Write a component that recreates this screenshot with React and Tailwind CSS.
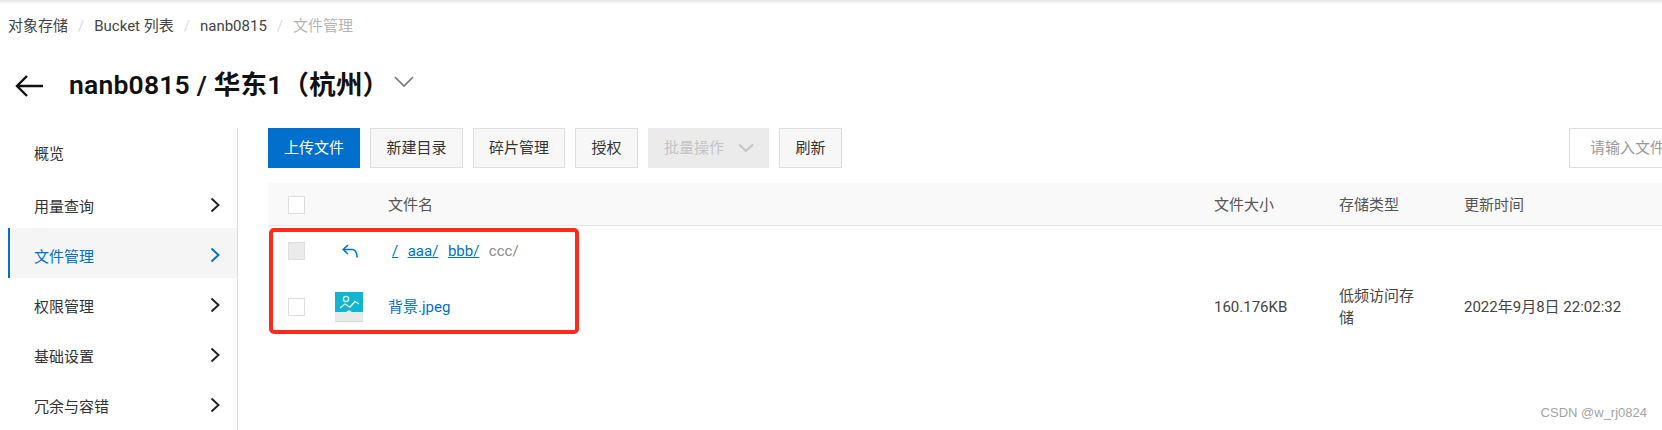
import React from "react";

const Chevron = ({ active }) => (
  <svg width="11" height="16" viewBox="0 0 11 16" fill="none" className="shrink-0 -mt-[4px]">
    <path d="M1.5 1.5 L8.5 8 L1.5 14.5" stroke={active ? "#0070cc" : "#222222"} strokeWidth="1.9" />
  </svg>
);

const Btn = ({ children, primary, className = "" }) => (
  <button
    className={
      primary
        ? `h-10 bg-[#0070cc] text-white text-[15px] ${className}`
        : `h-10 bg-[#f7f7f7] border border-[#dedede] text-[#333333] text-[15px] ${className}`
    }
  >
    {children}
  </button>
);

const Check = ({ filled }) => (
  <span className={`block w-[17px] h-[18px] border ${filled ? "bg-[#ebebeb] border-[#dedede]" : "bg-white border-[#dedede]"}`} />
);

const NavItem = ({ label, active, chevron = true, top = true }) => (
  <div
    className={`h-[50px] flex items-center justify-between pr-[16px] text-[15px] ${top ? "pt-[8px]" : "pt-[2px]"} ${
      active ? "bg-[#f5f5f5] border-l-2 border-[#0070cc] pl-[24px] text-[#0070cc]" : "pl-[26px] text-[#333333]"
    }`}
  >
    <span>{label}</span>
    {chevron && <Chevron active={active} />}
  </div>
);

const Sep = () => <span className="mx-[10px] text-[#dcdcdc] text-[15px]">/</span>;

const rowGrid = "grid grid-cols-[67px_53px_826px_125px_125px_1fr] items-center";

export default function App() {
  return (
    <div className="relative w-[1662px] h-[430px] overflow-hidden bg-white [font-family:'Roboto','Noto_Sans_CJK_SC',sans-serif]">
      <div className="h-[4px] bg-gradient-to-b from-[#e4e4e4] to-white" />

      <nav className="h-[44px] flex items-center pl-[8px] text-[15px] text-[#444444]">
        <span>对象存储</span>
        <Sep />
        <span>Bucket 列表</span>
        <Sep />
        <span>nanb0815</span>
        <Sep />
        <span className="text-[#b5b5b5]">文件管理</span>
      </nav>

      <header className="h-[80px] flex items-start pt-[17px] pl-[15px]">
        <svg width="29" height="24" viewBox="0 0 29 24" fill="none" className="mt-[9px]">
          <path d="M12 2 L2 12 L12 22 M2 12 H28" stroke="#111111" strokeWidth="2.4" />
        </svg>
        <h1 className="ml-[25px] text-[26.5px] leading-[40px] font-semibold tracking-[0.2px] text-[#111111] whitespace-nowrap">
          nanb0815 / 华东1（杭州）
        </h1>
        <svg width="20" height="12" viewBox="0 0 20 12" fill="none" className="ml-[5px] mt-[11px]">
          <path d="M1 1 L10 10 L19 1" stroke="#777777" strokeWidth="1.6" />
        </svg>
      </header>

      <main className="flex h-[302px]">
        <aside className="w-[238px] shrink-0 pl-[8px] border-r border-[#dcdcdc]">
          <NavItem label="概览" chevron={false} top={false} />
          <NavItem label="用量查询" />
          <NavItem label="文件管理" active />
          <NavItem label="权限管理" />
          <NavItem label="基础设置" />
          <NavItem label="冗余与容错" />
        </aside>

        <section className="flex-1 min-w-0 pl-[30px]">
          <div className="flex gap-[10px] h-10">
            <Btn primary className="w-[92px]">上传文件</Btn>
            <Btn className="w-[93px]">新建目录</Btn>
            <Btn className="w-[92px]">碎片管理</Btn>
            <Btn className="w-[63px]">授权</Btn>
            <button className="h-10 w-[121px] flex items-center pl-[16px] bg-[#ebebeb] text-[#c4c4c4] text-[15px]">
              批量操作
              <svg width="16" height="10" viewBox="0 0 16 10" fill="none" className="ml-[14px]">
                <path d="M1 1.5 L8 8 L15 1.5" stroke="#c4c4c4" strokeWidth="2" />
              </svg>
            </button>
            <Btn className="w-[63px]">刷新</Btn>
            <div className="ml-auto w-[93px] h-10 border border-r-0 border-[#dedede] pl-[20px] flex items-center text-[15px] text-[#999999] whitespace-nowrap overflow-hidden">
              请输入文件名
            </div>
          </div>

          <div className={`${rowGrid} mt-[15px] h-[43px] pt-[2px] bg-[#f9f9f9] border-b border-[#e5e5e5] text-[15px] text-[#555555]`}>
            <div className="pl-[20px]"><Check /></div>
            <div />
            <div>文件名</div>
            <div>文件大小</div>
            <div>存储类型</div>
            <div>更新时间</div>
          </div>

          <div className={`${rowGrid} h-[50px] text-[15px]`}>
            <div className="pl-[20px]"><Check filled /></div>
            <div className="pl-[7px]">
              <svg width="16" height="14" viewBox="0 0 16 14" fill="none">
                <path d="M6 1 L1.2 5.5 L6 10 M1.2 5.5 H10 C13 5.5 15 7.5 15 13.5" stroke="#0070cc" strokeWidth="1.5" />
              </svg>
            </div>
            <div className="pl-[4px] flex gap-[9.5px] text-[#0070cc]">
              <a className="underline">/</a>
              <a className="underline">aaa/</a>
              <a className="underline">bbb/</a>
              <span className="text-[#888888]">ccc/</span>
            </div>
            <div />
            <div />
            <div />
          </div>

          <div className={`${rowGrid} h-[62px] text-[15px] text-[#444444]`}>
            <div className="pl-[20px]"><Check /></div>
            <div>
              <svg width="28" height="30" viewBox="0 0 28 30" className="block">
                <rect width="28" height="30" fill="#e9e9e9" />
                <path d="M0 0 H28 V20 H17 L14 18 L11 20 H0 Z" fill="#11b5cf" />
                <circle cx="11" cy="7" r="2.6" fill="none" stroke="#d8f4f8" strokeWidth="1.4" />
                <path d="M5 16 L10 12 L15 15 L20 9.5 L24 12" fill="none" stroke="#d8f4f8" strokeWidth="1.4" />
                <path d="M0 29.5 H28" stroke="#d8d8d8" />
              </svg>
            </div>
            <div className="text-[#0070cc]">背景.jpeg</div>
            <div>160.176KB</div>
            <div className="w-[80px] leading-[22px]">低频访问存储</div>
            <div className="whitespace-nowrap">2022年9月8日 22:02:32</div>
          </div>
        </section>
      </main>

      <div className="absolute left-[269px] top-[228px] w-[310px] h-[106px] border-[4px] border-[#ff2a1a] rounded-[5px] pointer-events-none" />
      <div className="absolute right-[15px] top-[404px] text-[13px] leading-[18px] text-[#a3a3a3] [font-family:'Liberation_Sans',sans-serif]">
        CSDN @w_rj0824
      </div>
    </div>
  );
}
